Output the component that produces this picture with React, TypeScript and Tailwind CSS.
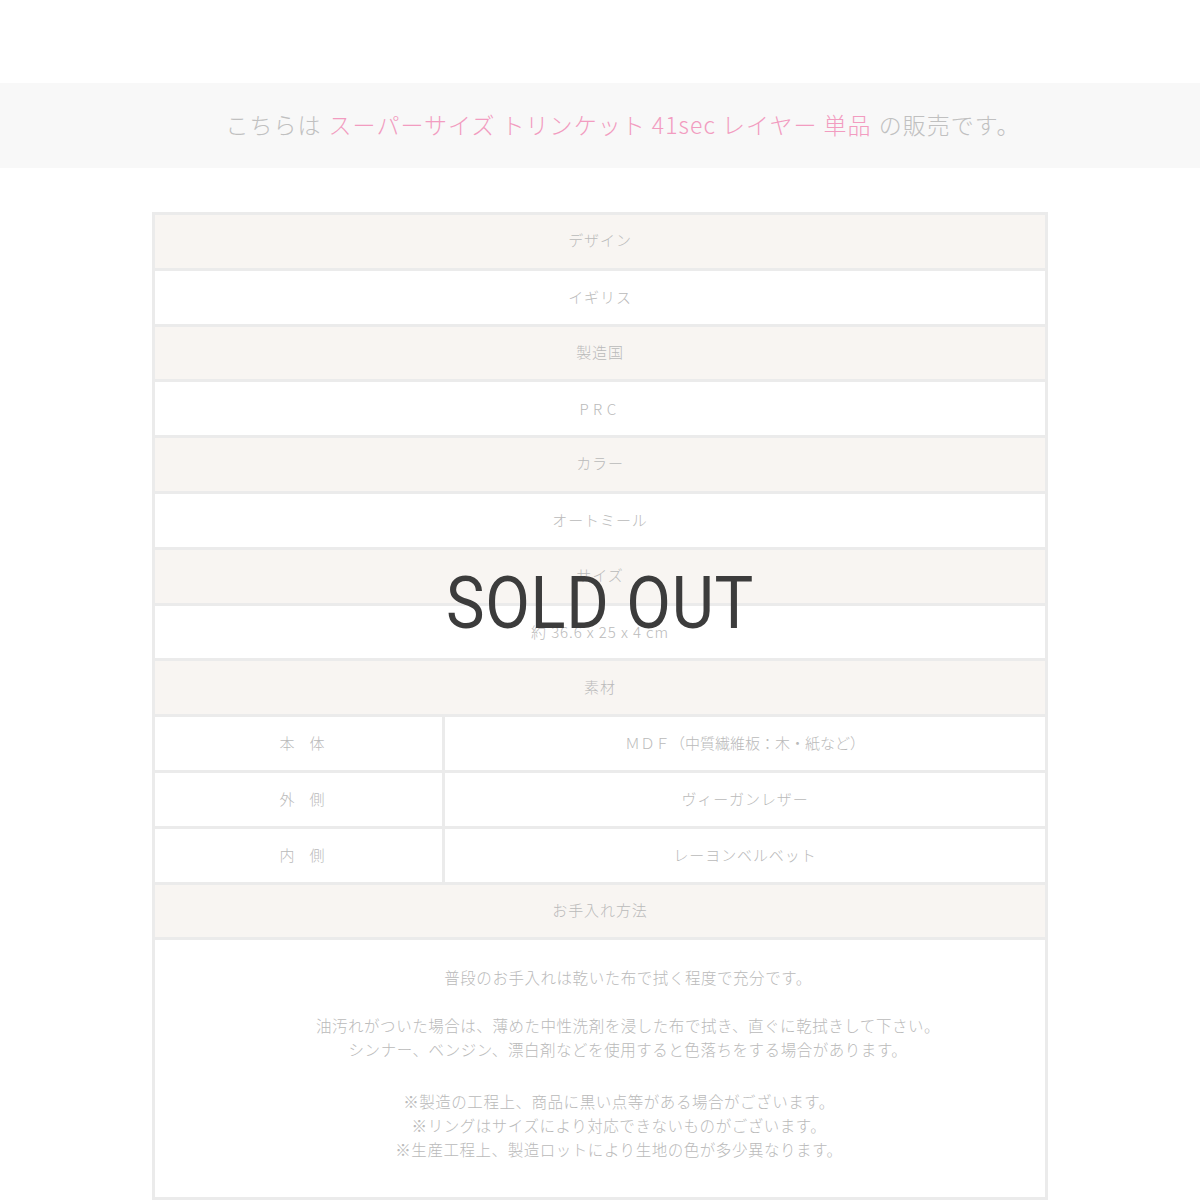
import React from "react";

const jp = { fontFamily: '"Noto Sans CJK JP", "Noto Sans", sans-serif' };

function HeadRow({ label }: { label: string }) {
  return (
    <div className="h-[55.8px] flex items-center justify-center bg-[#f8f5f2] border-b-[3px] border-[#ebebeb] text-[15px] text-[#bababa] tracking-[0.06em] pb-[2px]">
      {label}
    </div>
  );
}

function ValueRow({ value, wide }: { value: string; wide?: boolean }) {
  return (
    <div
      className={
        "h-[55.8px] flex items-center justify-center bg-white border-b-[3px] border-[#ebebeb] text-[15px] text-[#bababa] " +
        (wide ? "tracking-[0.3em]" : "tracking-[0.06em]")
      }
    >
      {value}
    </div>
  );
}

function SplitRow({ label, value, tight }: { label: string; value: string; tight?: boolean }) {
  return (
    <div className="h-[55.8px] flex bg-white border-b-[3px] border-[#ebebeb] text-[15px] text-[#bababa]">
      <div className="w-[290px] flex items-center justify-center border-r-[3px] border-[#ebebeb] tracking-[1em] pl-[22px]">
        {label}
      </div>
      <div
        className={
          "flex-1 flex items-center justify-center " + (tight ? "tracking-[0em]" : "tracking-[0.06em]")
        }
      >
        {value}
      </div>
    </div>
  );
}

export default function App() {
  return (
    <div className="w-[1200px] h-[1200px] bg-white overflow-hidden font-light" style={jp}>
      <div className="h-[83px]" />

      {/* Banner */}
      <div className="h-[85px] bg-[#f8f8f8] flex items-center justify-center pl-[46px] text-[23px] text-[#c0c0c0] tracking-[0.045em] pb-[2px]">
        <span>こちらは</span>
        <span className="text-[#f29cc0] ml-[7px]">スーパーサイズ トリンケット 41sec レイヤー 単品</span>
        <span className="ml-[7px]">の販売です。</span>
      </div>

      <div className="h-[44px]" />

      {/* Spec table */}
      <div className="relative mx-auto w-[896px] border-x-[3px] border-t-[3px] border-[#ebebeb]">
        <HeadRow label="デザイン" />
        <ValueRow value="イギリス" />
        <HeadRow label="製造国" />
        <ValueRow value="PRC" wide />
        <HeadRow label="カラー" />
        <ValueRow value="オートミール" />
        <HeadRow label="サイズ" />
        <ValueRow value="約 36.6 x 25 x 4 cm" />
        <HeadRow label="素材" />
        <SplitRow label="本体" value="ＭＤＦ（中質繊維板：木・紙など）" tight />
        <SplitRow label="外側" value="ヴィーガンレザー" />
        <SplitRow label="内側" value="レーヨンベルベット" />
        <HeadRow label="お手入れ方法" />
        <div className="bg-white border-b-[3px] border-[#ebebeb] pt-[25px] pb-[36px] pl-[56px] text-center text-[15.5px] leading-[24px] text-[#bababa] tracking-[0.035em]">
          <p>普段のお手入れは乾いた布で拭く程度で充分です。</p>
          <p className="mt-[24px]">油汚れがついた場合は、薄めた中性洗剤を浸した布で拭き、直ぐに乾拭きして下さい。</p>
          <p>シンナー、ベンジン、漂白剤などを使用すると色落ちをする場合があります。</p>
          <p className="mt-[28px] pr-[18px]">※製造の工程上、商品に黒い点等がある場合がございます。</p>
          <p className="pr-[18px]">※リングはサイズにより対応できないものがございます。</p>
          <p className="pr-[18px]">※生産工程上、製造ロットにより生地の色が多少異なります。</p>
        </div>

        {/* SOLD OUT overlay */}
        <div className="absolute left-0 right-0 top-[352px] flex justify-center pointer-events-none">
          <span
            className="text-[73px] font-normal leading-none text-[#3c3c3c] scale-x-[0.89] tracking-[0.01em]"
            style={{ fontFamily: "Roboto, sans-serif" }}
          >
            SOLD OUT
          </span>
        </div>
      </div>
    </div>
  );
}
